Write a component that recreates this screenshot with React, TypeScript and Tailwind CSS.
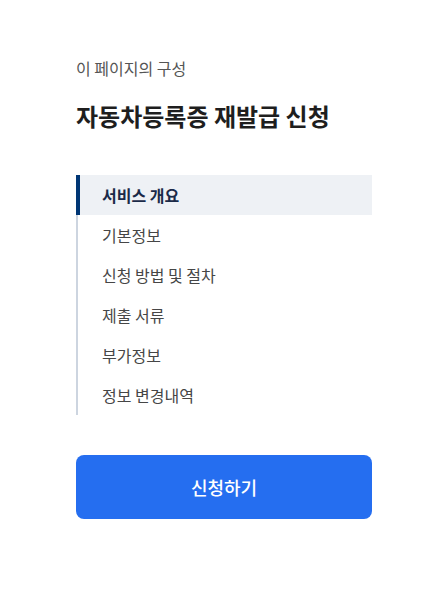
const items = ['서비스 개요', '기본정보', '신청 방법 및 절차', '제출 서류', '부가정보', '정보 변경내역'];

export default function App() {
  return (
    <div
      className="min-h-[590px] w-full bg-white pl-[76px] pr-[54px] pt-[56px]"
      style={{ fontFamily: '"Noto Sans CJK KR", "Noto Sans", sans-serif' }}
    >
      <p className="text-[16px] leading-6 text-[#555]">이 페이지의 구성</p>
      <h2 className="mt-[20px] text-[24px] font-bold leading-8 text-[#1e1e1e]">자동차등록증 재발급 신청</h2>
      <nav className="mt-[43px] border-l-2 border-[#cdd5e0]">
        <ul>
          {items.map((item, i) => (
            <li key={item}>
              <a
                href="#"
                className={
                  i === 0
                    ? '-ml-[2px] flex h-10 items-center border-l-4 border-[#003675] bg-[#eef1f5] pl-[22px] text-[16px] font-bold text-[#1a2a48]'
                    : 'flex h-10 items-center pl-[24px] text-[16px] text-[#464646]'
                }
              >
                {item}
              </a>
            </li>
          ))}
        </ul>
      </nav>
      <button className="mt-[40px] flex h-16 w-full items-center justify-center rounded-lg bg-[#256ef0] text-[18px] font-medium text-white">
        신청하기
      </button>
    </div>
  );
}
